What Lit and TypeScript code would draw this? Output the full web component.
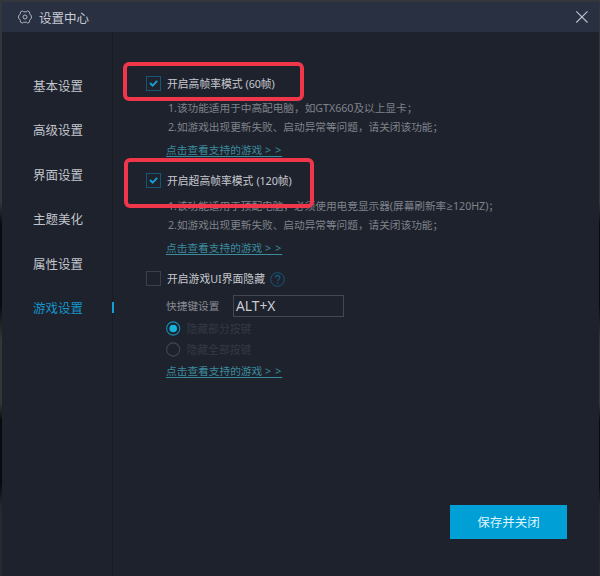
import { LitElement, html, css, svg } from "lit";
import { customElement, state } from "lit/decorators.js";
import { classMap } from "lit/directives/class-map.js";

const NAV = ["基本设置", "高级设置", "界面设置", "主题美化", "属性设置", "游戏设置"];

@customElement("setting-check")
class SettingCheck extends LitElement {
  static properties = { label: {}, suffix: {}, checked: { type: Boolean }, help: { type: Boolean } };
  declare label: string;
  declare suffix: string;
  declare checked: boolean;
  declare help: boolean;

  static styles = css`
    :host { display: flex; align-items: center; height: 20px; color: #c6c9cf; white-space: nowrap; }
    .box { width: 13px; height: 13px; border: 1px solid #3a3f49; margin-right: 6px; flex: none; }
    .box.on { border-color: #155774; }
    svg { display: block; }
    .suffix { margin-left: 3px; letter-spacing: -0.1px; }
    .help { margin: 2px 0 0 5px; }
  `;

  render() {
    return html`
      <span class=${classMap({ box: true, on: this.checked })}>
        ${this.checked
          ? html`<svg width="13" height="13" viewBox="0 0 13 13"><path d="M3 6 5.6 8.6 10.2 3.9" fill="none" stroke="#159dd2" stroke-width="2" /></svg>`
          : ""}
      </span>
      <span>${this.label}</span>
      ${this.suffix ? html`<span class="suffix">${this.suffix}</span>` : ""}
      ${this.help
        ? html`<svg class="help" width="15" height="15" viewBox="0 0 15 15" fill="none" stroke="#17577a">
            <circle cx="7.5" cy="7.5" r="6.8" />
            <path d="M5.3 5.8c0-1.5 1-2.3 2.3-2.3s2.2.8 2.2 2c0 1.6-2.1 1.7-2.1 3.5M7.7 10.3v1.3" stroke-width="1.3" />
          </svg>`
        : ""}
    `;
  }
}

@customElement("app-root")
class AppRoot extends LitElement {
  @state() active = 5;
  @state() mode = 0;

  static styles = css`
    :host {
      display: block; position: relative; box-sizing: border-box; width: 600px; height: 576px; overflow: hidden;
      padding: 2px 1px 0 2px; font: 10.8px/19px "Noto Sans", "Noto Sans CJK SC", sans-serif;
      background: linear-gradient(#33363a 0 35%, #080a0e 39% 53%, #343638 59% 70%, #080a0d 73% 84%, #272a2d 88%);
    }
    .window { height: 100%; background: #1e222c; display: flex; flex-direction: column; }
    header {
      height: 30px; flex: none; display: flex; align-items: center; background: #293041;
      color: #c8ccd5; font-size: 12.5px; padding: 0 10px 0 16px;
    }
    header .title { flex: 1; margin: 2px 0 0 7px; }
    .body { flex: 1; display: flex; min-height: 0; }
    nav { width: 110px; border-right: 1px solid #191c25; padding-top: 32.3px; font-size: 12.5px; color: #c2c5cc; }
    .item { height: 44.4px; display: flex; align-items: center; justify-content: space-between; padding-left: 31px; }
    .item.active { color: #1495cb; }
    .item.active::after { content: ""; width: 2px; height: 11px; background: #12a0d5; margin: -2px -2px 0 0; }
    main { flex: 1; display: flex; flex-direction: column; padding: 41px 0 0 33px; }
    .details {
      display: flex; flex-direction: column; height: 71.5px; margin-top: 6px; padding-left: 22px;
      color: #7e828b; white-space: nowrap; font-size: 10.7px; letter-spacing: -0.04px;
    }
    .sign { font-family: "Open Sans", "DejaVu Sans", sans-serif; font-size: 11px; line-height: 1; margin-right: 0.5px; }
    .links { margin: 4px 0 0 -2px; }
    a { font-size: 10.7px; letter-spacing: 0; color: #3b8b9e; text-decoration: underline; text-underline-offset: 2px; }
    .more { letter-spacing: 0.75px; }
    .hotkey { display: flex; align-items: center; height: 22px; margin: 7px 0 0 20px; color: #898d95; font-size: 10.7px; }
    .field {
      box-sizing: border-box; width: 111px; height: 22px; margin-left: 13.5px; border: 1px solid #434750;
      padding-left: 2px; color: #c9ccd2; font-size: 13.8px; line-height: 20px;
    }
    .radio { display: flex; align-items: center; height: 21px; margin-left: 20px; color: #343944; gap: 5.5px; }
    .radios { margin-top: 1px; }
    .last { margin: 1px 0 0 20px; }
    .save {
      width: 117px; height: 34px; margin: auto 32px 37px auto; background: #009fd5; color: #dff3fb;
      font-size: 12.5px; display: flex; align-items: center; justify-content: center;
    }
    .mark { position: absolute; box-sizing: border-box; border: 4px solid #f0364a; border-radius: 6px; pointer-events: none; }
    .mark.a { left: 123px; top: 62px; width: 181px; height: 39px; }
    .mark.b { left: 124px; top: 158px; width: 190px; height: 50px; }
  `;

  private radio(label: string, index: number) {
    const on = this.mode === index;
    return html`<div class="radio" @click=${() => (this.mode = index)}>
      <svg width="15" height="15" viewBox="0 0 15 15">
        <circle cx="7.2" cy="7.5" r="6.6" fill="none" stroke=${on ? "#168db5" : "#424650"} stroke-width="1.1" />
        ${on ? svg`<circle cx="7.2" cy="7.5" r="3.8" fill="#14b4dc" />` : ""}
      </svg>
      <span>${label}</span>
    </div>`;
  }

  private link() {
    return html`<a>点击查看支持的游戏 <span class="more">&gt; &gt;</span></a>`;
  }

  render() {
    return html`
      <div class="window">
        <header>
          <svg width="14" height="14" viewBox="0 0 14 14" fill="none" stroke="#adb3bf">
            <path d="M4.2.9 5.7 1.8h2.6l1.5-.9 1.8 1.1v1.7l1.8 2.2v2.2l-1.8 2.2V12l-1.8 1.1-1.5-.9H5.7l-1.5.9L2.4 12v-1.7L.6 8.1V5.9l1.8-2.2V2z" />
            <circle cx="7" cy="7" r="2" />
          </svg>
          <span class="title">设置中心</span>
          <svg width="14" height="14" viewBox="0 0 14 14"><path d="M1.3 1.3 12.5 12.5M12.5 1.3 1.3 12.5" stroke="#b9bdc7" stroke-width="1.2" /></svg>
        </header>
        <div class="body">
          <nav>
            ${NAV.map((name, i) => html`<div class=${classMap({ item: true, active: i === this.active })} @click=${() => (this.active = i)}>${name}</div>`)}
          </nav>
          <main>
            <setting-check label="开启高帧率模式" suffix="(60帧)" checked></setting-check>
            <div class="details">
              <span>1.该功能适用于中高配电脑，如GTX660及以上显卡；</span>
              <span>2.如游戏出现更新失败、启动异常等问题，请关闭该功能；</span>
              <span class="links">${this.link()}</span>
            </div>
            <setting-check label="开启超高帧率模式" suffix="(120帧)" checked></setting-check>
            <div class="details">
              <span>1.该功能适用于顶配电脑，必须使用电竞显示器(屏幕刷新率<span class="sign">≥</span>120HZ)；</span>
              <span>2.如游戏出现更新失败、启动异常等问题，请关闭该功能；</span>
              <span class="links">${this.link()}</span>
            </div>
            <setting-check label="开启游戏UI界面隐藏" help></setting-check>
            <div class="hotkey"><span>快捷键设置</span><div class="field">ALT+X</div></div>
            <div class="radios">${this.radio("隐藏部分按键", 0)}${this.radio("隐藏全部按键", 1)}</div>
            <div class="last">${this.link()}</div>
            <div class="save">保存并关闭</div>
          </main>
        </div>
      </div>
      <div class="mark a"></div>
      <div class="mark b"></div>
    `;
  }
}
